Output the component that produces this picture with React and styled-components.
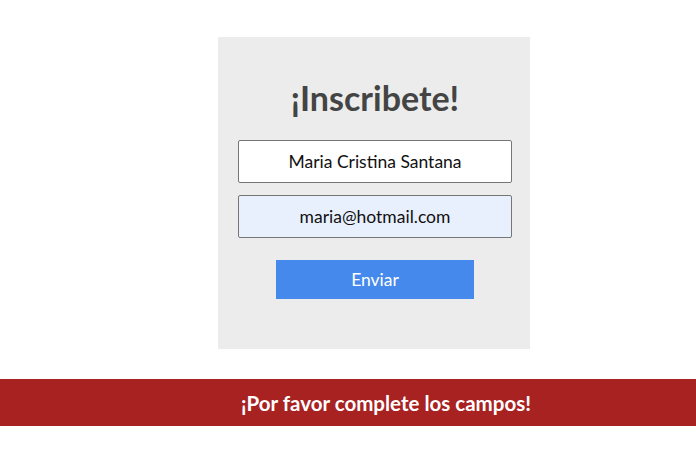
import React from 'react';
import styled, { createGlobalStyle } from 'styled-components';

const GlobalStyle = createGlobalStyle`
    html, body {
        margin: 0;
        padding: 0;
        background: #ffffff;
        font-family: "Century Gothic", Lato, "Liberation Sans", sans-serif;
    }
`;

const Page = styled.div`
    width: 696px;
    height: 458px;
    display: flex;
    flex-direction: column;
    padding-top: 37px;
    box-sizing: border-box;
`;

const CardRow = styled.div`
    display: flex;
    padding-left: 218px;
`;

const Card = styled.form`
    width: 312px;
    height: 312px;
    background: #ececec;
    box-sizing: border-box;
    padding: 40px 18px 0 20px;
    display: flex;
    flex-direction: column;
    align-items: center;
`;

const Title = styled.h1`
    margin: 0 0 21px;
    font-size: 34px;
    line-height: 42px;
    font-weight: bold;
    color: #444444;
`;

const Field = styled.input`
    width: 274px;
    height: 43px;
    box-sizing: border-box;
    border: 1px solid #767676;
    border-radius: 2px;
    background: ${(p) => (p.filled ? '#e8f0fe' : '#ffffff')};
    text-align: center;
    font-family: inherit;
    font-size: 17.5px;
    color: #111111;
    margin-bottom: 12px;
    outline: none;
`;

const SendButton = styled.button`
    margin-top: 10px;
    width: 198px;
    height: 39px;
    border: none;
    background: #4589ec;
    color: #ffffff;
    font-family: inherit;
    font-size: 17.5px;
    cursor: pointer;
`;

const Alert = styled.div`
    margin-top: 30px;
    height: 47px;
    background: #a82222;
    color: #ffffff;
    display: flex;
    align-items: center;
    justify-content: center;
    padding-left: 76px;
    font-size: 20.5px;
    font-weight: bold;
`;

export default function App() {
    return (
        <>
            <GlobalStyle />
            <Page>
                <CardRow>
                    <Card onSubmit={(e) => e.preventDefault()}>
                        <Title>¡Inscribete!</Title>
                        <Field type="text" defaultValue="Maria Cristina Santana" />
                        <Field type="email" filled defaultValue="maria@hotmail.com" />
                        <SendButton type="submit">Enviar</SendButton>
                    </Card>
                </CardRow>
                <Alert>¡Por favor complete los campos!</Alert>
            </Page>
        </>
    );
}
